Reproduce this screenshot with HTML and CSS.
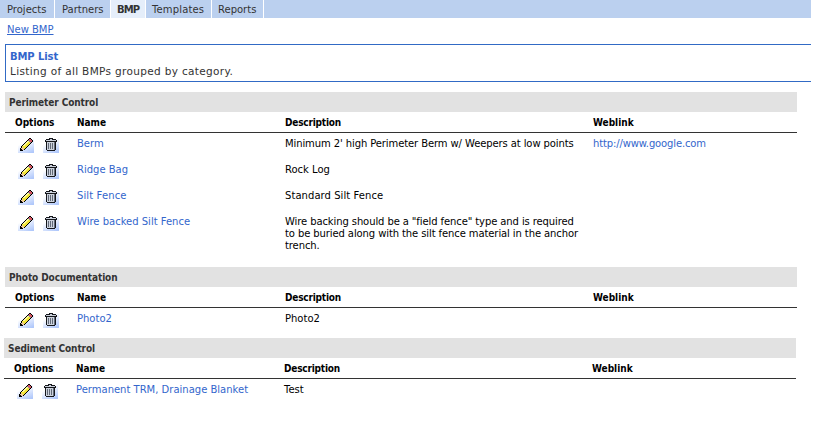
FILE: index.html
```html
<!DOCTYPE html>
<html lang="en">
<head>
<meta charset="utf-8">
<title>BMP List</title>
<link rel="stylesheet" href="styles.css">
</head>
<body>
<svg class="sprites" width="0" height="0" aria-hidden="true">
  <defs>
    <linearGradient id="tile" x1="0.3" y1="0" x2="0.8" y2="1">
      <stop offset="0.3" stop-color="#ffffff"/>
      <stop offset="1" stop-color="#b0c8fb"/>
    </linearGradient>
  </defs>
  <symbol id="pencil" viewBox="0 0 16 16">
    <rect width="16" height="16" fill="url(#tile)"/>
    <g shape-rendering="crispEdges">
      <path d="M11 1h2v1h-2zM10 2h4v1h-4zM9 3h6v1h-6zM8 4h7v1h-7zM7 5h7v1h-7zM6 6h7v1h-7zM5 7h7v1h-7zM4 8h7v1h-7zM3 9h7v1h-7zM3 10h6v1h-6zM2 11h6v1h-6zM2 12h5v1h-5zM2 13h3v1h-3z" fill="#000"/>
      <path d="M10 3h1v1h-1zM9 4h3v1h-3zM8 5h5v1h-5zM7 6h5v1h-5zM6 7h5v1h-5zM5 8h5v1h-5zM4 9h5v1h-5zM5 10h3v1h-3zM6 11h1v1h-1z" fill="#f3e637"/>
      <path d="M9 4h2v1h-2zM8 5h2v1h-2zM7 6h2v1h-2zM6 7h2v1h-2zM5 8h2v1h-2z" fill="#fffa9b"/>
      <path d="M11 2h2v1h-2zM11 3h3v1h-3zM12 4h2v1h-2z" fill="#d85763"/>
      <path d="M10 3h1v1h-1zM11 4h1v1h-1zM12 5h1v1h-1z" fill="#8d8f98"/>
      <path d="M4 10h1v1h-1zM3 11h3v1h-3zM4 12h2v1h-2z" fill="#efca9a"/>
    </g>
  </symbol>
  <symbol id="trash" viewBox="0 0 16 16">
    <rect width="16" height="16" fill="url(#tile)"/>
    <g shape-rendering="crispEdges">
      <path d="M6 1h4v1h3v1h1v2h-1v8h-1v1h-8v-1h-1v-8h-1v-2h1v-1h3z" fill="#15171c"/>
      <path d="M7 2h2v1h-2zM3 3h10v1h-10zM4 5h8v8h-8z" fill="#cbd1dc"/>
      <path d="M5 6h1v6h-1zM7 6h1v6h-1zM9 6h1v6h-1zM11 5h1v8h-1z" fill="#626a78"/>
    </g>
  </symbol>
</svg>
<nav class="tabs">
  <a class="tab"><span>Projects</span></a>
  <a class="tab partners"><span>Partners</span></a>
  <a class="tab active"><span>BMP</span></a>
  <a class="tab templates"><span>Templates</span></a>
  <a class="tab reports"><span>Reports</span></a>
</nav>
<div class="actions"><a href="#">New BMP</a></div>
<header class="intro">
  <h1>BMP List</h1>
  <p>Listing of all BMPs grouped by category.</p>
</header>
<main>
  <section class="group perimeter">
    <h2>Perimeter Control</h2>
    <div class="row head"><span class="opt">Options</span><span>Name</span><span class="desc">Description</span><span>Weblink</span></div>
    <div class="row"><span class="icons"><svg><use href="#pencil"/></svg><svg><use href="#trash"/></svg></span><a>Berm</a><span class="desc">Minimum 2' high Perimeter Berm w/ Weepers at low points</span><a class="url">http://www.google.com</a></div>
    <div class="row"><span class="icons"><svg><use href="#pencil"/></svg><svg><use href="#trash"/></svg></span><a>Ridge Bag</a><span>Rock Log</span></div>
    <div class="row"><span class="icons"><svg><use href="#pencil"/></svg><svg><use href="#trash"/></svg></span><a class="silt">Silt Fence</a><span class="standard">Standard Silt Fence</span></div>
    <div class="row"><span class="icons"><svg><use href="#pencil"/></svg><svg><use href="#trash"/></svg></span><a>Wire backed Silt Fence</a><span class="desc">Wire backing should be a "field fence" type and is required<br>to be buried along with the silt fence material in the anchor<br>trench.</span></div>
  </section>
  <section class="group photo">
    <h2>Photo Documentation</h2>
    <div class="row head"><span class="opt">Options</span><span>Name</span><span class="desc">Description</span><span>Weblink</span></div>
    <div class="row"><span class="icons"><svg><use href="#pencil"/></svg><svg><use href="#trash"/></svg></span><a>Photo2</a><span>Photo2</span></div>
  </section>
  <section class="group sediment">
    <h2>Sediment Control</h2>
    <div class="row head"><span class="opt">Options</span><span>Name</span><span class="desc">Description</span><span>Weblink</span></div>
    <div class="row"><span class="icons"><svg><use href="#pencil"/></svg><svg><use href="#trash"/></svg></span><a>Permanent TRM, Drainage Blanket</a><span>Test</span></div>
  </section>
</main>
</body>
</html>
```
FILE: styles.css
```css
* { box-sizing: border-box; }
body {
  margin: 0;
  background: #fff;
  color: #000;
  font: 10px/12px "DejaVu Sans", Verdana, sans-serif;
  white-space: nowrap;
}
a { color: #3366cc; }
.sprites { position: absolute; }
.tabs { display: flex; width: 811px; height: 18px; background: #bbd0ef; line-height: 19px; }
.tab { width: 55px; padding-left: 7px; border-right: 1px solid #fff; color: #333; }
.partners { width: 56px; }
.active { width: 35px; padding-left: 6px; background: #e5eefa; font-weight: bold; letter-spacing: -0.9px; }
.templates { width: 66px; padding-left: 6px; letter-spacing: 0.15px; }
.reports { width: 52px; padding-left: 6px; }
.actions { height: 26px; padding: 6px 0 0 7px; }
.intro { width: 806px; height: 38px; margin-left: 5px; padding: 5px 0 0 4px; border: 1px solid #316ac5; border-right: 0; color: #333; }
.intro h1 { margin: 0; color: #3366cc; font-size: 10px; line-height: 13px; letter-spacing: -0.1px; }
.intro p { margin: 2px 0 0; font-size: 10.5px; line-height: 13px; letter-spacing: 0.34px; }
.group { width: 792px; margin-left: 5px; }
.perimeter { height: 175px; margin-top: 10px; }
.photo { height: 71px; }
.sediment { margin-left: 4px; }
.group h2 { height: 20px; margin: 0; padding-left: 4px; background: #e2e2e2; color: #333; font: bold 10px/21px "DejaVu Sans Condensed", "DejaVu Sans", sans-serif; letter-spacing: -0.1px; }
.row { display: grid; grid-template-columns: 72px 208px 308px 1fr; min-height: 26px; padding-top: 5px; }
.desc { letter-spacing: -0.1px; }
.url { letter-spacing: -0.14px; }
.silt { letter-spacing: 0.12px; }
.standard { letter-spacing: 0.06px; }
.head { min-height: 21px; height: 21px; padding-top: 0; border-bottom: 1px solid #333; font: bold 10px/21px "DejaVu Sans Condensed", "DejaVu Sans", sans-serif; }
.head .desc { letter-spacing: -0.2px; }
.opt { padding-left: 10px; }
.icons { display: flex; gap: 9px; height: 16px; padding-left: 13px; margin-top: -1px; }
.icons svg { width: 16px; height: 16px; }
```
